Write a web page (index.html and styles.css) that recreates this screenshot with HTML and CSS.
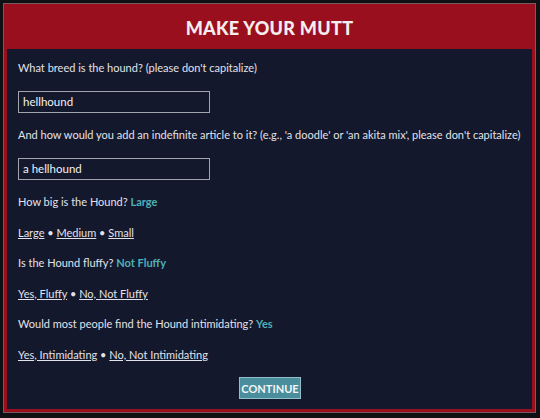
FILE: index.html
```html
<!DOCTYPE html>
<html lang="en">
<head>
  <meta charset="UTF-8" />
  <title>Make Your Mutt</title>
  <link rel="stylesheet" href="styles.css">
</head>
<body>
  <div class="mutt-box">
    <h1 class="mutt-title">MAKE YOUR MUTT</h1>

    <div class="mutt-body">
      <p>What breed is the hound? (please don't capitalize)</p>
      <input type="text" class="field" value="hellhound">

      <p>And how would you add an indefinite article to it? (e.g., 'a doodle' or 'an akita mix', please don't capitalize)</p>
      <input type="text" class="field" value="a hellhound">

      <p>How big is the Hound? <span class="pick">Large</span></p>
      <p><a href="#">Large</a> &bull; <a href="#">Medium</a> &bull; <a href="#">Small</a></p>

      <p>Is the Hound fluffy? <span class="pick">Not Fluffy</span></p>
      <p><a href="#">Yes, Fluffy</a> &bull; <a href="#">No, Not Fluffy</a></p>

      <p>Would most people find the Hound intimidating? <span class="pick">Yes</span></p>
      <p><a href="#">Yes, Intimidating</a> &bull; <a href="#">No, Not Intimidating</a></p>

      <div class="actions">
        <button class="continue">CONTINUE</button>
      </div>
    </div>
  </div>
</body>
</html>
```

FILE: styles.css
```css
* {
  box-sizing: border-box;
  margin: 0;
  padding: 0;
}

body {
  background: #0f1014;
  font-family: 'Lato', sans-serif;
  padding: 3px 4px 0 3px;
  height: 418px;
  overflow: hidden;
}

.mutt-box {
  width: 533px;
  height: 410px;
  border: 1px solid #7a5a60;
  background: #9a0f1e;
  display: flex;
  flex-direction: column;
}

.mutt-title {
  flex-shrink: 0;
  height: 45px;
  display: flex;
  align-items: center;
  justify-content: center;
  color: #f4eef0;
  font-size: 18px;
  font-weight: 900;
  letter-spacing: 0.3px;
  padding-top: 2px;
}

.mutt-body {
  flex: 1;
  margin: 0 3px 3px 3px;
  background: #13182c;
  padding: 11px 11px 10px 11px;
  display: flex;
  flex-direction: column;
  align-items: flex-start;
  gap: 14.5px;
  color: #e2e2ea;
  font-size: 11px;
}

p {
  line-height: 16px;
  white-space: nowrap;
}

.pick {
  color: #4fb0b6;
  font-weight: 700;
}

a {
  color: #e2e2ea;
  text-decoration: underline;
}

.field {
  width: 192px;
  height: 22px;
  border: 1px solid #a2a4ae;
  background: #13182c;
  color: #f2f2f6;
  font-family: 'Lato', sans-serif;
  font-size: 11.5px;
  padding: 0 4px;
}

.actions {
  align-self: stretch;
  display: flex;
  justify-content: center;
  padding-left: 1px;
}

.continue {
  width: 62px;
  height: 22px;
  background: #4a8d9c;
  border: 1px solid #8fc0cc;
  color: #f2f6f8;
  font-family: 'Lato', sans-serif;
  font-size: 11px;
  font-weight: 700;
}
```
